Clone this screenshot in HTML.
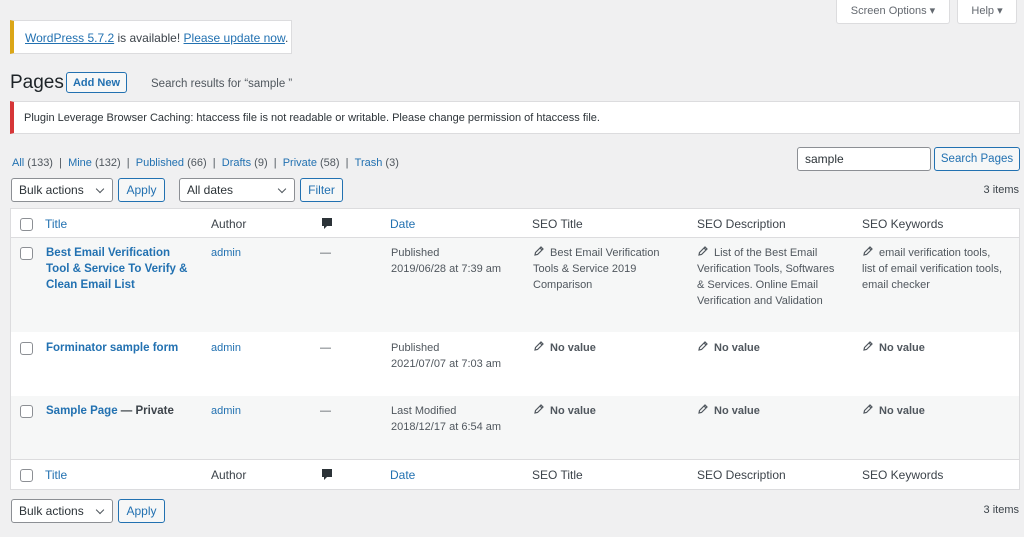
<!DOCTYPE html>
<html><head><meta charset="utf-8"><style>
*{box-sizing:border-box;margin:0;padding:0}
body{width:1024px;height:537px;background:#f0f0f1;font-family:"Liberation Sans",sans-serif;color:#3c434a;position:relative;overflow:hidden;font-size:12px}
.a{position:absolute;white-space:nowrap}
.l{color:#2271b1}
.btn{position:absolute;border:1px solid #2271b1;border-radius:3px;color:#2271b1;background:#f6f7f7;font-size:12px;text-align:center}
.sel{position:absolute;border:1px solid #8c8f94;border-radius:3px;background:#fff;font-size:12px;padding-left:7px;color:#2c3338}
.sel:after{content:"";position:absolute;right:9px;top:7px;width:5px;height:5px;border-right:1.5px solid #50575e;border-bottom:1.5px solid #50575e;transform:rotate(45deg)}
.cb{position:absolute;width:13px;height:13px;border:1px solid #8c8f94;border-radius:3px;background:#fff}
.sm{font-size:11px;line-height:16px;color:#50575e}
.pen{display:inline-block;width:11px;height:11px;vertical-align:-1px;margin-right:6px}
.b{font-weight:bold}
</style></head><body>
<div class="a" style="left:836px;top:0;width:114px;height:24px;background:#fff;border:1px solid #dcdcde;border-top:0;border-radius:0 0 3px 3px;font-size:11px;color:#646970;text-align:center;line-height:23px">Screen Options ▾</div>
<div class="a" style="left:957px;top:0;width:60px;height:24px;background:#fff;border:1px solid #dcdcde;border-top:0;border-radius:0 0 3px 3px;font-size:11px;color:#646970;text-align:center;line-height:23px">Help ▾</div>

<div class="a" style="left:10px;top:20px;width:282px;height:34px;background:#fff;border:1px solid #dcdcde;border-left:4px solid #dba617;font-size:12px;line-height:34px;padding-left:11px">
<span class="l" style="text-decoration:underline">WordPress 5.7.2</span> is available! <span class="l" style="text-decoration:underline">Please update now</span>.</div>

<div class="a" style="left:10px;top:72px;font-size:19px;color:#1d2327">Pages</div>
<div class="btn" style="left:66px;top:72px;width:61px;height:21px;line-height:20px;font-weight:bold;font-size:11px">Add New</div>
<div class="a" style="left:151px;top:78px;font-size:11.5px;color:#50575e">Search results for “sample ”</div>

<div class="a" style="left:10px;top:101px;width:1010px;height:33px;background:#fff;border:1px solid #dcdcde;border-left:4px solid #d63638;font-size:11px;line-height:33px;padding-left:10px;color:#2c3338">Plugin Leverage Browser Caching: htaccess file is not readable or writable. Please change permission of htaccess file.</div>

<div class="a" style="left:12px;top:157px;font-size:11px;color:#50575e"><span class="l">All</span> (133) &nbsp;| &nbsp;<span class="l">Mine</span> (132) &nbsp;| &nbsp;<span class="l">Published</span> (66) &nbsp;| &nbsp;<span class="l">Drafts</span> (9) &nbsp;| &nbsp;<span class="l">Private</span> (58) &nbsp;| &nbsp;<span class="l">Trash</span> (3)</div>

<div class="a" style="left:797px;top:147px;width:134px;height:24px;background:#fff;border:1px solid #8c8f94;border-radius:3px;font-size:12px;line-height:22px;padding-left:7px;color:#2c3338">sample</div>
<div class="btn" style="left:934px;top:147px;width:86px;height:24px;line-height:22px;font-size:11.5px">Search Pages</div>

<div class="sel" style="left:11px;top:178px;width:102px;height:24px;line-height:22px">Bulk actions</div>
<div class="btn" style="left:118px;top:178px;width:47px;height:24px;line-height:22px">Apply</div>
<div class="sel" style="left:179px;top:178px;width:116px;height:24px;line-height:22px">All dates</div>
<div class="btn" style="left:300px;top:178px;width:43px;height:24px;line-height:22px">Filter</div>
<div class="a" style="right:5px;top:184px;font-size:11px">3 items</div>

<div class="a" style="left:10px;top:208px;width:1010px;height:282px;background:#fff;border:1px solid #dcdcde"></div>
<div class="a" style="left:11px;top:237px;width:1008px;height:1px;background:#dcdcde"></div>
<div class="a" style="left:11px;top:238px;width:1008px;height:94px;background:#f6f7f7"></div>
<div class="a" style="left:11px;top:396px;width:1008px;height:63px;background:#f6f7f7"></div>
<div class="a" style="left:11px;top:459px;width:1008px;height:1px;background:#dcdcde"></div>

<div class="cb" style="left:20px;top:218px"></div>
<div class="a l" style="left:45px;top:217px">Title</div>
<div class="a" style="left:211px;top:217px">Author</div>
<svg class="a" style="left:321px;top:217px" width="12" height="13" viewBox="0 0 12 13"><path d="M1 1h10v8H6l-3 3V9H1z" fill="#2c3338"/></svg>
<div class="a l" style="left:390px;top:217px">Date</div>
<div class="a" style="left:532px;top:217px">SEO Title</div>
<div class="a" style="left:697px;top:217px">SEO Description</div>
<div class="a" style="left:862px;top:217px">SEO Keywords</div>

<div class="cb" style="left:20px;top:469px"></div>
<div class="a l" style="left:45px;top:468px">Title</div>
<div class="a" style="left:211px;top:468px">Author</div>
<svg class="a" style="left:321px;top:468px" width="12" height="13" viewBox="0 0 12 13"><path d="M1 1h10v8H6l-3 3V9H1z" fill="#2c3338"/></svg>
<div class="a l" style="left:390px;top:468px">Date</div>
<div class="a" style="left:532px;top:468px">SEO Title</div>
<div class="a" style="left:697px;top:468px">SEO Description</div>
<div class="a" style="left:862px;top:468px">SEO Keywords</div>

<svg width="0" height="0" style="position:absolute"><defs><symbol id="p" viewBox="0 0 11 11"><path d="M2 9l0.5-2.5L8 1l2 2-5.5 5.5z M7 2l2 2" fill="none" stroke="#50575e" stroke-width="1.2"/></symbol></defs></svg>

<div class="cb" style="left:20px;top:247px"></div>
<div class="a l b" style="left:46px;top:245px;line-height:16px;font-size:11.5px">Best Email Verification<br>Tool &amp; Service To Verify &amp;<br>Clean Email List</div>
<div class="a l sm" style="left:211px;top:245px;color:#2271b1">admin</div>
<div class="a sm" style="left:320px;top:245px">—</div>
<div class="a sm" style="left:391px;top:245px">Published<br>2019/06/28 at 7:39 am</div>
<div class="a sm" style="left:533px;top:245px"><svg class="pen"><use href="#p"/></svg>Best Email Verification<br>Tools &amp; Service 2019<br>Comparison</div>
<div class="a sm" style="left:697px;top:245px"><svg class="pen"><use href="#p"/></svg>List of the Best Email<br>Verification Tools, Softwares<br>&amp; Services. Online Email<br>Verification and Validation</div>
<div class="a sm" style="left:862px;top:245px"><svg class="pen"><use href="#p"/></svg>email verification tools,<br>list of email verification tools,<br>email checker</div>

<div class="cb" style="left:20px;top:342px"></div>
<div class="a l b" style="left:46px;top:340px;line-height:16px;font-size:11.5px">Forminator sample form</div>
<div class="a sm" style="left:211px;top:340px;color:#2271b1">admin</div>
<div class="a sm" style="left:320px;top:340px">—</div>
<div class="a sm" style="left:391px;top:340px">Published<br>2021/07/07 at 7:03 am</div>
<div class="a sm b" style="left:533px;top:340px"><svg class="pen"><use href="#p"/></svg>No value</div>
<div class="a sm b" style="left:697px;top:340px"><svg class="pen"><use href="#p"/></svg>No value</div>
<div class="a sm b" style="left:862px;top:340px"><svg class="pen"><use href="#p"/></svg>No value</div>

<div class="cb" style="left:20px;top:405px"></div>
<div class="a b" style="left:46px;top:403px;line-height:16px;font-size:11.5px;color:#3c434a"><span class="l">Sample Page</span> — Private</div>
<div class="a sm" style="left:211px;top:403px;color:#2271b1">admin</div>
<div class="a sm" style="left:320px;top:403px">—</div>
<div class="a sm" style="left:391px;top:403px">Last Modified<br>2018/12/17 at 6:54 am</div>
<div class="a sm b" style="left:533px;top:403px"><svg class="pen"><use href="#p"/></svg>No value</div>
<div class="a sm b" style="left:697px;top:403px"><svg class="pen"><use href="#p"/></svg>No value</div>
<div class="a sm b" style="left:862px;top:403px"><svg class="pen"><use href="#p"/></svg>No value</div>

<div class="sel" style="left:11px;top:499px;width:102px;height:24px;line-height:22px">Bulk actions</div>
<div class="btn" style="left:118px;top:499px;width:47px;height:24px;line-height:22px">Apply</div>
<div class="a" style="right:5px;top:504px;font-size:11px">3 items</div>
</body></html>
